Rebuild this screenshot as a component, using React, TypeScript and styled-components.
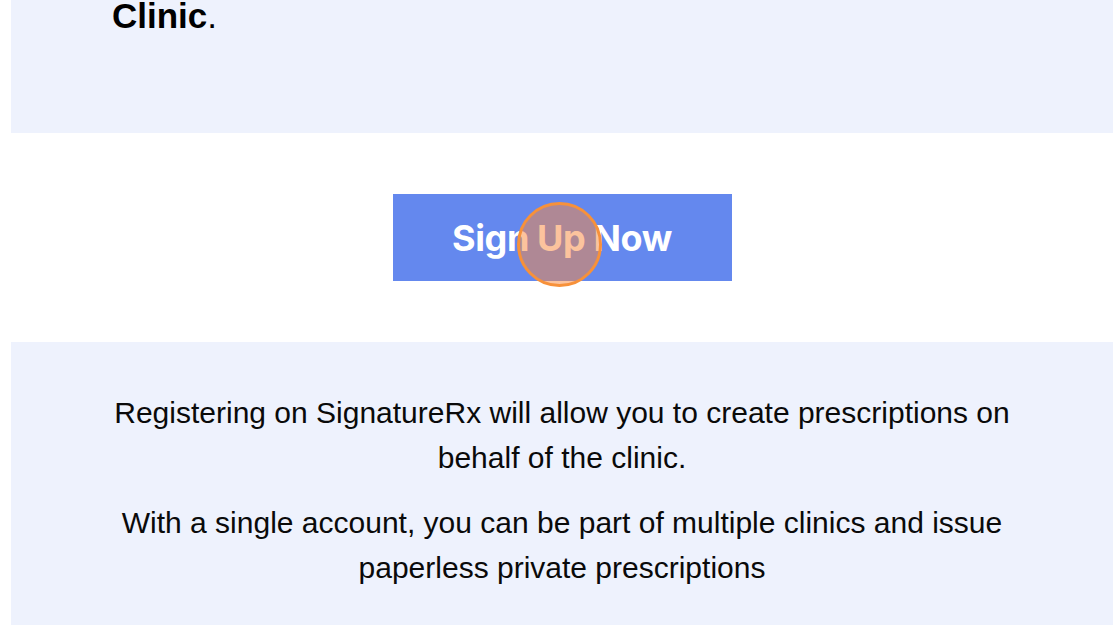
import React from "react";
import styled, { createGlobalStyle } from "styled-components";

const Global = createGlobalStyle`
  html, body { margin: 0; padding: 0; background: #ffffff; }
  body { font-family: "Liberation Sans", Arial, sans-serif; color: #111111; overflow: hidden; }
`;

const Page = styled.div`
  padding: 0 6px 0 11px;
`;

const TopPanel = styled.section`
  background: #eef2fd;
  height: 133px;
  padding-left: 101px;
  overflow: hidden;
`;

const Heading = styled.h1`
  margin: -4px 0 0;
  font-size: 35px;
  line-height: 40px;
  font-weight: 700;
  color: #000000;
`;

const Dot = styled.span`
  font-weight: 400;
`;

const ButtonRow = styled.div`
  display: flex;
  justify-content: center;
  padding: 61px 0;
`;

const SignUpButton = styled.a`
  position: relative;
  display: flex;
  align-items: center;
  justify-content: center;
  width: 339px;
  height: 87px;
  background: #6488ee;
  color: #ffffff;
  font-family: Inter, "Liberation Sans", sans-serif;
  font-weight: 700;
  font-size: 36px;
  letter-spacing: -0.4px;
  text-decoration: none;
`;

const ClickMarker = styled.span`
  position: absolute;
  left: 124px;
  top: 8px;
  width: 79px;
  height: 79px;
  border-radius: 50%;
  border: 3px solid #f7913a;
  background: rgba(250, 136, 60, 0.5);
  pointer-events: none;
`;

const InfoPanel = styled.section`
  background: #eef2fd;
  padding: 48px 90px 40px;
  text-align: center;
`;

const Paragraph = styled.p`
  margin: 0 0 20px;
  font-size: 30px;
  line-height: 45px;
  color: #0a0a0a;
`;

export default function App() {
  return (
    <>
      <Global />
      <Page>
        <TopPanel>
          <Heading>
            Clinic<Dot>.</Dot>
          </Heading>
        </TopPanel>
        <ButtonRow>
          <SignUpButton href="#">
            Sign Up Now
            <ClickMarker />
          </SignUpButton>
        </ButtonRow>
        <InfoPanel>
          <Paragraph>
            Registering on SignatureRx will allow you to create prescriptions on behalf of the clinic.
          </Paragraph>
          <Paragraph>
            With a single account, you can be part of multiple clinics and issue paperless private prescriptions
          </Paragraph>
        </InfoPanel>
      </Page>
    </>
  );
}
